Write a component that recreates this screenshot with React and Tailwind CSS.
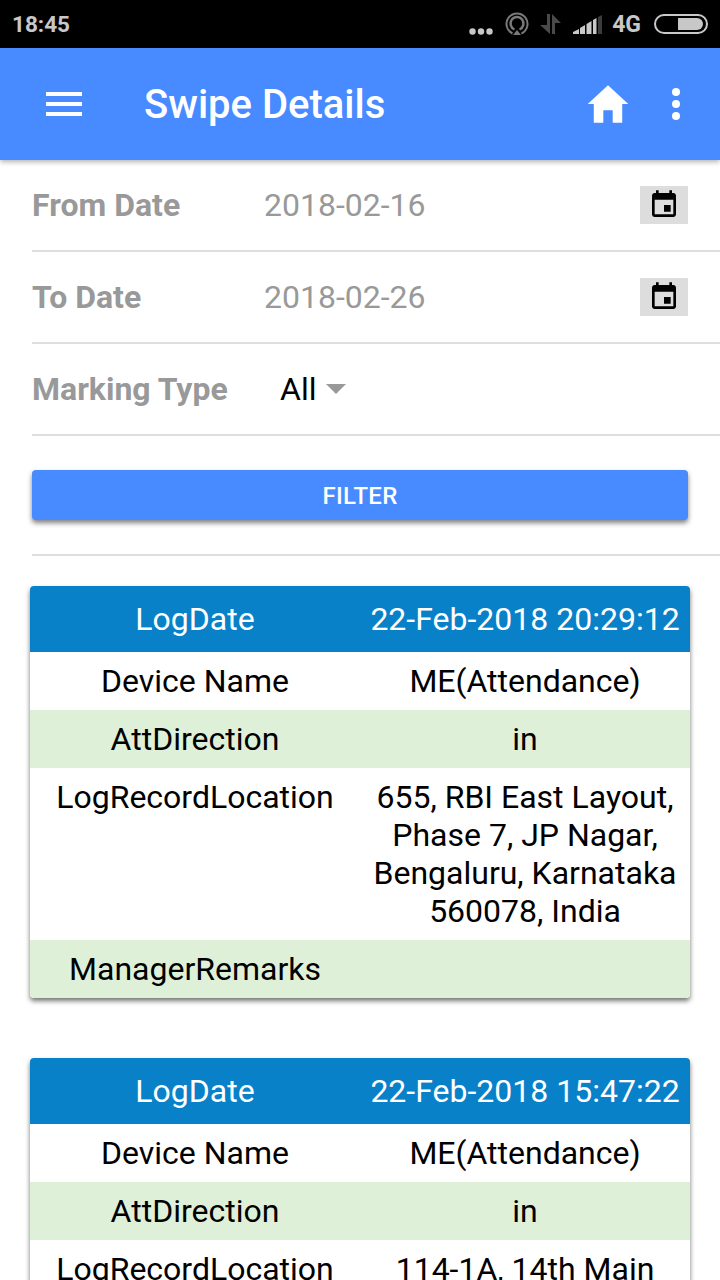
import React from "react";

const roboto = { fontFamily: "Roboto, sans-serif" };

function StatusBar() {
  return (
    <div className="flex h-12 items-center justify-between bg-black pl-[12px] pr-[12px] text-[#c8c8c8]">
      <span className="text-[22.5px] font-bold leading-none">18:45</span>
      <div className="flex items-center">
        <svg width="24" height="7" viewBox="0 0 24 7" className="mt-[14px] mr-[12px]" fill="#c8c8c8">
          <circle cx="3.500" cy="3.500" r="3.200" />
          <circle cx="12" cy="3.500" r="3.200" />
          <circle cx="20.500" cy="3.500" r="3.200" />
        </svg>
        <svg width="24" height="24" viewBox="0 0 24 24" className="mr-[11px]" fill="none" stroke="#7a7a7a">
          <path d="M7.500 21.500a10.500 10.500 0 1 1 9 0" strokeWidth="2" />
          <path d="M9.500 17.500a6.500 6.500 0 1 1 5 0" strokeWidth="2.400" />
          <path d="M8 23l4-5 4 5z" fill="#7a7a7a" stroke="none" />
        </svg>
        <svg width="22" height="20" viewBox="0 0 22 20" className="mr-[11px]" fill="#4a4a4a">
          <path d="M10 0v20L0 11h7V0zM12 20V0l9 9h-6v11z" />
        </svg>
        <svg width="30" height="20" viewBox="0 0 30 20" className="mr-[9px]">
          <path d="M0 18l6-3v5H0z" fill="#c8c8c8" />
          <path d="M7 14l5-3v9H7z" fill="#c8c8c8" />
          <path d="M13.500 10l5-3v13h-5z" fill="#c8c8c8" />
          <path d="M20 6l3.500-2v16H20z" fill="#c8c8c8" />
          <path d="M25 3l4-2v19h-4z" fill="#3c3c3c" />
        </svg>
        <span className="mr-[13px] text-[23px] font-bold leading-none">4G</span>
        <div className="flex h-[20px] w-[54px] items-center justify-end rounded-full border-2 border-[#c8c8c8] px-[3px]">
          <div className="h-[12px] w-[25px] rounded-r-full bg-[#c8c8c8]" />
        </div>
      </div>
    </div>
  );
}

function Toolbar() {
  return (
    <div className="relative z-10 flex h-[112px] items-center bg-[#488aff] pl-[46px] pr-[40px] text-white shadow-[0_2px_5px_rgba(0,0,0,0.3)]">
      <div className="flex w-[36px] flex-col gap-[6px]">
        <div className="h-1 bg-white" />
        <div className="h-1 bg-white" />
        <div className="h-1 bg-white" />
      </div>
      <h1 className="ml-[62px] flex-1 pt-[2px] text-[40px] font-medium leading-none">Swipe Details</h1>
      <svg width="50" height="50" viewBox="0 0 512 512" fill="#fff">
        <path d="M208 448V320h96v128h97.600V256H464L256 64 48 256h62.400v192z" />
      </svg>
      <svg width="8" height="32" viewBox="0 0 8 32" fill="#fff" className="ml-[39px]">
        <circle cx="4" cy="4" r="4" />
        <circle cx="4" cy="16" r="4" />
        <circle cx="4" cy="28" r="4" />
      </svg>
    </div>
  );
}

function DateRow({ label, value }) {
  return (
    <div className="ml-8 flex h-[92px] items-center border-b-2 border-[#dedede] pr-8">
      <span className="w-[232px] text-[32px] font-bold text-[#999]">{label}</span>
      <span className="flex-1 text-[32px] text-[#999]">{value}</span>
      <div className="flex h-[38px] w-12 items-center justify-center bg-[#ddd]">
        <svg width="32" height="32" viewBox="0 0 24 24" fill="#000">
          <path d="M17 12h-5v5h5v-5zM16 1v2H8V1H6v2H5c-1.110 0-1.990.9-1.990 2L3 19c0 1.100.89 2 2 2h14c1.100 0 2-.9 2-2V5c0-1.100-.9-2-2-2h-1V1h-2zm3 18H5V8h14v11z" />
        </svg>
      </div>
    </div>
  );
}

function Row({ left, right, green }) {
  return (
    <div className={`grid grid-cols-2 py-[10px] text-center text-[32px] leading-[38px] text-black ${green ? "bg-[#dff0d8]" : "bg-white"}`}>
      <div>{left}</div>
      <div className="min-h-[38px] px-2">{right}</div>
    </div>
  );
}

function SwipeCard({ time, address }) {
  return (
    <div className="mx-[30px] mb-[60px] overflow-hidden rounded-[4px] shadow-[0_3px_5px_rgba(0,0,0,0.55)]">
      <div className="grid grid-cols-2 bg-[#0881c9] py-[14px] text-center text-[32px] leading-[38px] text-white">
        <div>LogDate</div>
        <div className="whitespace-nowrap">{time}</div>
      </div>
      <Row left="Device Name" right="ME(Attendance)" />
      <Row left="AttDirection" right="in" green />
      <Row left="LogRecordLocation" right={address} />
      <Row left="ManagerRemarks" right="" green />
    </div>
  );
}

export default function App() {
  return (
    <div className="h-[1280px] w-[720px] overflow-hidden bg-white" style={roboto}>
      <StatusBar />
      <Toolbar />
      <DateRow label="From Date" value="2018-02-16" />
      <DateRow label="To Date" value="2018-02-26" />
      <div className="ml-8 flex h-[92px] items-center border-b-2 border-[#dedede]">
        <span className="w-[248px] text-[32px] font-bold text-[#999]">Marking Type</span>
        <span className="text-[32px] text-black">All</span>
        <div className="ml-[10px] h-0 w-0 border-x-[10px] border-t-[10px] border-x-transparent border-t-[#999]" />
      </div>
      <div className="ml-8 border-b-2 border-[#dedede] pb-[34px] pr-8 pt-[34px]">
        <button className="h-[50px] w-full rounded-[4px] bg-[#488aff] pt-[2px] text-[24px] font-medium tracking-[0.3px] text-white shadow-[0_3px_5px_rgba(0,0,0,0.5)]">
          FILTER
        </button>
      </div>
      <div className="pt-[30px]">
        <SwipeCard
          time="22-Feb-2018 20:29:12"
          address="655, RBI East Layout, Phase 7, JP Nagar, Bengaluru, Karnataka 560078, India"
        />
        <SwipeCard time="22-Feb-2018 15:47:22" address="114-1A, 14th Main" />
      </div>
    </div>
  );
}
